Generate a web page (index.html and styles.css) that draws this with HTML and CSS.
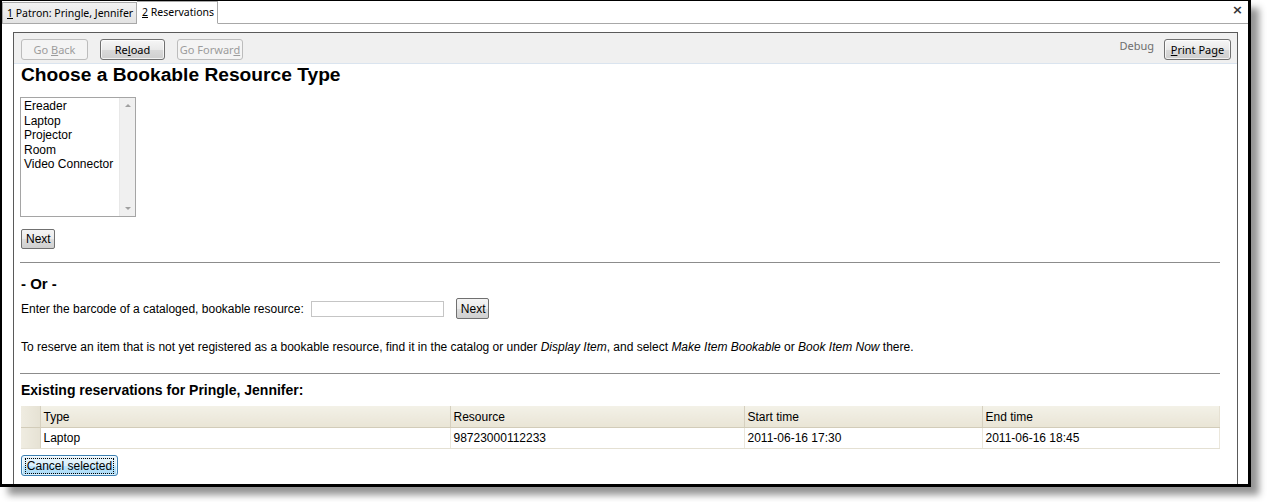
FILE: index.html
```html
<!DOCTYPE html>
<html>
<head>
<meta charset="utf-8">
<link rel="stylesheet" href="styles.css">
</head>
<body>
<div class="window">
  <div class="tabbar">
    <div class="tab"><u>1</u> Patron: Pringle, Jennifer</div>
    <div class="tab active"><u>2</u> Reservations</div>
    <div class="tab-fill"></div>
    <div class="close">&#x00D7;</div>
  </div>
  <div class="panel-wrap">
    <div class="panel">
      <div class="toolbar">
        <button class="tb-btn disabled" style="width:67px">Go <u>B</u>ack</button>
        <button class="tb-btn" style="width:65px">Re<u>l</u>oad</button>
        <button class="tb-btn disabled" style="width:66px">Go Forwar<u>d</u></button>
        <div class="tb-spacer"></div>
        <span class="debug">Debug</span>
        <button class="tb-btn" style="width:67px"><u>P</u>rint Page</button>
      </div>
      <div class="content">
        <h1 class="title">Choose a Bookable Resource Type</h1>
        <div class="listbox">
          <div class="list-items">
            <div>Ereader</div>
            <div>Laptop</div>
            <div>Projector</div>
            <div>Room</div>
            <div>Video Connector</div>
          </div>
          <div class="scrollbar">
            <span class="arrow up"></span>
            <span class="arrow down"></span>
          </div>
        </div>
        <button class="btn next-1">Next</button>
        <div class="rule rule-1"></div>
        <h2 class="or">- Or -</h2>
        <div class="barcode-row">
          <span>Enter the barcode of a cataloged, bookable resource:</span>
          <span class="input"></span>
          <button class="btn">Next</button>
        </div>
        <p class="note">To reserve an item that is not yet registered as a bookable resource, find it in the catalog or under <i>Display Item</i>, and select <i>Make Item Bookable</i> or <i>Book Item Now</i> there.</p>
        <div class="rule rule-2"></div>
        <h3 class="existing">Existing reservations for Pringle, Jennifer:</h3>
        <table class="grid">
          <colgroup>
            <col style="width:19px">
            <col style="width:410px">
            <col style="width:294px">
            <col style="width:238px">
            <col>
          </colgroup>
          <thead>
            <tr><th class="sel"></th><th>Type</th><th>Resource</th><th>Start time</th><th>End time</th></tr>
          </thead>
          <tbody>
            <tr><td class="sel"></td><td>Laptop</td><td>98723000112233</td><td>2011-06-16 17:30</td><td>2011-06-16 18:45</td></tr>
          </tbody>
        </table>
        <button class="btn cancel"><span class="focus">Cancel selected</span></button>
      </div>
    </div>
  </div>
</div>
</body>
</html>
```

FILE: styles.css
```css
html, body {
  margin: 0;
  padding: 0;
  background: #ffffff;
  width: 1270px;
  height: 502px;
  overflow: hidden;
}
body {
  font-family: "Liberation Sans", Arial, sans-serif;
  font-size: 12px;
  color: #000;
}
.window {
  box-sizing: border-box;
  width: 1251px;
  height: 487px;
  border-style: solid;
  border-color: #000;
  border-width: 1px 3px 3px 2px;
  background: #fff;
  box-shadow: 8px 8px 7px rgba(0, 0, 0, 0.42);
  display: flex;
  flex-direction: column;
  overflow: hidden;
}
.tabbar {
  display: flex;
  align-items: flex-end;
  height: 23px;
  font-family: "Noto Sans", "Open Sans", sans-serif;
  font-size: 10.5px;
  position: relative;
}
.tab {
  box-sizing: border-box;
  height: 22px;
  line-height: 20px;
  padding: 0 0 0 4px;
  border: 1px solid #a8a8a8;
  background: linear-gradient(#f2f2f2, #e3e3e3);
  color: #000;
  white-space: nowrap;
  width: 135px;
  overflow: hidden;
}
.tab.active {
  background: #fff;
  border-bottom-color: #fff;
  border-left: none;
  height: 23px;
  line-height: 21px;
  width: 81px;
  padding-left: 5px;
}
.tab-fill {
  flex: 1;
  height: 22px;
  border-bottom: 1px solid #a8a8a8;
  box-sizing: border-box;
}
.close {
  position: absolute;
  right: 5px;
  top: 1px;
  font-family: "DejaVu Sans", sans-serif;
  font-size: 13px;
  font-weight: bold;
  color: #333;
}
.panel-wrap {
  flex: 1;
  padding: 8px 10px 0 11px;
  display: flex;
  min-height: 0;
}
.panel {
  flex: 1;
  border: 1px solid #5a5a5a;
  border-bottom: none;
  display: flex;
  flex-direction: column;
  min-height: 0;
}
.toolbar {
  display: flex;
  align-items: center;
  height: 30px;
  padding: 0 6px 0 7px;
  background: #f0f0f0;
  border-bottom: 1px solid #dae4ef;
  gap: 12px;
}
.tb-spacer { flex: 1; }
.tb-btn {
  box-sizing: border-box;
  height: 21px;
  margin-top: 3px;
  padding: 0;
  font-family: "Noto Sans", "Open Sans", sans-serif;
  font-size: 11px;
  color: #000;
  border: 1px solid #707070;
  border-radius: 3px;
  background: linear-gradient(#f6f6f6 0%, #e9e9e9 50%, #dadada 51%, #cfcfcf 100%);
  box-shadow: inset 0 0 0 1px rgba(255,255,255,0.7);
}
.tb-btn.disabled {
  color: #9c9c9c;
  border-color: #bcbcbc;
  background: #f4f4f4;
  box-shadow: none;
}
.debug {
  font-family: "Noto Sans", "Open Sans", sans-serif;
  font-size: 11px;
  color: #6d6d6d;
  margin-top: -6px;
  margin-right: -2px;
}
.content {
  padding: 0 17px 0 7px;
}
.title {
  margin: 0;
  font-size: 19.2px;
  line-height: 22px;
  font-weight: bold;
}
.listbox {
  box-sizing: border-box;
  margin: 11px 0 0 -1px;
  width: 116px;
  height: 120px;
  border: 1px solid #a5a5a5;
  display: flex;
}
.list-items {
  flex: 1;
  padding: 1px 0 0 3px;
  font-size: 12px;
  line-height: 14.5px;
}
.scrollbar {
  width: 15px;
  background: #f0f0f0;
  border-left: 1px solid #e8e8e8;
  position: relative;
}
.arrow {
  position: absolute;
  left: 5px;
  width: 0;
  height: 0;
  border-left: 3px solid transparent;
  border-right: 3px solid transparent;
}
.arrow.up { top: 6px; border-bottom: 3px solid #a0a0a0; }
.arrow.down { bottom: 6px; border-top: 3px solid #a0a0a0; }
.btn {
  box-sizing: border-box;
  display: inline-block;
  height: 20px;
  padding: 0 4px;
  font-family: "Liberation Sans", Arial, sans-serif;
  font-size: 12px;
  color: #000;
  border: 1px solid #707070;
  border-radius: 2px;
  background: linear-gradient(#f4f4f4 0%, #ebebeb 50%, #dddddd 51%, #cfcfcf 100%);
}
.next-1 {
  display: block;
  margin-top: 12px;
  width: 34px;
}
.rule {
  height: 0;
  border-top: 1px solid #8c8c8c;
  margin-left: -1px;
}
.rule-1 { margin-top: 13px; }
.or {
  margin: 12px 0 0 0;
  font-size: 15px;
  line-height: 17px;
  font-weight: bold;
}
.barcode-row {
  display: flex;
  align-items: center;
  margin-top: 6px;
  height: 21px;
}
.barcode-row .input {
  box-sizing: border-box;
  width: 133px;
  height: 16px;
  border: 1px solid #c5c5c5;
  margin-left: 7px;
  margin-right: 12px;
}
.barcode-row .btn {
  width: 33px;
  height: 21px;
}
.note {
  margin: 21px 0 0 0;
  line-height: 14px;
}
.rule-2 { margin-top: 19px; }
.existing {
  margin: 8px 0 0 0;
  font-size: 14px;
  line-height: 16px;
  font-weight: bold;
}
.grid {
  margin-top: 8px;
  width: 1199px;
  border-collapse: collapse;
  font-size: 12px;
  table-layout: fixed;
}
.grid th, .grid td {
  text-align: left;
  font-weight: normal;
  padding: 0 3px;
  white-space: nowrap;
}
.grid th {
  height: 21px;
  background: linear-gradient(#f3f1e7, #e9e5d6);
  border-right: 1px solid #d6d0bf;
  border-bottom: 1px solid #d2ccb9;
}
.grid th:last-child { border-right: 1px solid #e6e1d3; }
.grid td {
  height: 20px;
  border-right: 1px solid #ebe7dc;
  border-bottom: 1px solid #e4e0d3;
}
.grid .sel {
  padding: 0;
  background: linear-gradient(90deg, #efece1, #e6e2d4);
  border-right: 1px solid #d6d0bf;
}
.cancel {
  display: block;
  margin-top: 6px;
  width: 97px;
  height: 21px;
  padding: 0 2px;
  border: 1px solid #3c7fb1;
  border-radius: 3px;
  background: linear-gradient(#e9f5fc 0%, #d9effb 50%, #bee6fd 51%, #a7d9f5 100%);
  box-shadow: inset 0 0 0 1px rgba(255,255,255,0.6);
}
.cancel .focus {
  outline: 1px dotted #000;
  padding: 0 1px;
}
```
